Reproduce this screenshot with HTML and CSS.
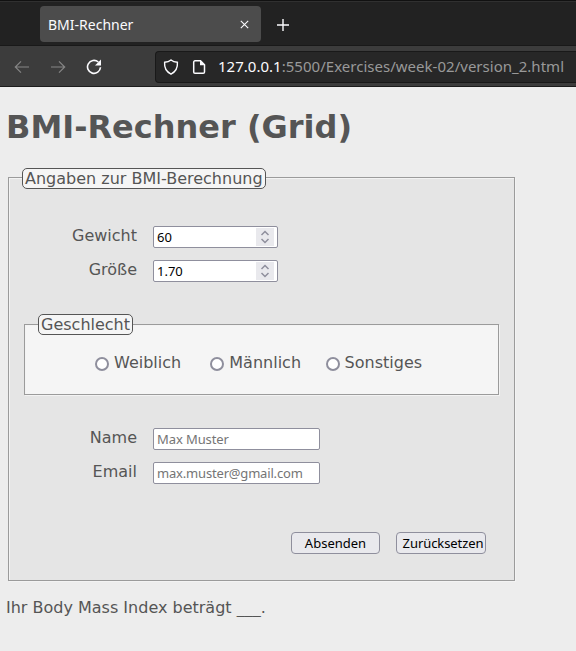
FILE: index.html
```html
<!DOCTYPE html>
<html lang="de">
<head>
<meta charset="utf-8">
<title>BMI-Rechner</title>
<link rel="stylesheet" href="styles.css">
</head>
<body>
<header class="browser">
  <div class="tabbar">
    <div class="tab">
      <span class="tab-title">BMI-Rechner</span>
      <svg class="close" width="9" height="9" viewBox="0 0 9 9"><path d="M.8.8l7.4 7.4M8.2.8L.8 8.2"/></svg>
    </div>
    <svg class="plus" width="12" height="12" viewBox="0 0 12 12"><path d="M6 0v12M0 6h12"/></svg>
  </div>
  <div class="toolbar">
    <svg class="nav" width="16" height="16" viewBox="0 0 16 16"><path d="M15 8H1.5M7 2.3L1.3 8 7 13.7"/></svg>
    <svg class="nav" width="16" height="16" viewBox="0 0 16 16"><path d="M1 8h13.500M9 2.300L14.700 8 9 13.700"/></svg>
    <svg class="nav reload" width="16" height="16" viewBox="0 0 16 16"><path d="M12.300 3A6.500 6.500 0 1 0 14.500 8.300"/><path class="solid" d="M15 .5v6H9z"/></svg>
    <div class="urlbar">
      <svg class="shield" width="16" height="16" viewBox="0 0 16 16"><path d="M8 1C6.300 2.400 4 3.100 1.600 3.300 1.200 8.500 3 12.700 8 15.100 13 12.700 14.800 8.500 14.400 3.300 12 3.100 9.700 2.400 8 1z"/></svg>
      <svg class="page-icon" width="14" height="16" viewBox="0 0 14 16"><path d="M3 1.800h5.500l4 4V13a1.300 1.300 0 0 1-1.300 1.300H3A1.300 1.300 0 0 1 1.700 13V3.100A1.300 1.300 0 0 1 3 1.800z"/><path class="solid" d="M8 1.300l5 5H8z"/></svg>
      <span class="url"><b>127.0.0.1</b>:5500/Exercises/week-02/version_2.html</span>
    </div>
  </div>
</header>
<main>
  <h1>BMI-Rechner (Grid)</h1>
  <form>
    <fieldset class="outer">
      <legend>Angaben zur BMI-Berechnung</legend>
      <div class="fields">
        <label for="gewicht">Gewicht</label>
        <div class="number">
          <input id="gewicht" type="text" value="60">
          <svg class="spin" width="18" height="18" viewBox="0 0 18 18"><path d="M5.500 7L9 3.500 12.500 7M5.500 11L9 14.500 12.500 11"/></svg>
        </div>
        <label for="groesse">Größe</label>
        <div class="number">
          <input id="groesse" type="text" value="1.70">
          <svg class="spin" width="18" height="18" viewBox="0 0 18 18"><path d="M5.500 7L9 3.500 12.500 7M5.500 11L9 14.500 12.500 11"/></svg>
        </div>
      </div>
      <fieldset class="gender">
        <legend>Geschlecht</legend>
        <div class="options">
          <label><input type="radio" name="g">Weiblich</label>
          <label><input type="radio" name="g">Männlich</label>
          <label><input type="radio" name="g">Sonstiges</label>
        </div>
      </fieldset>
      <div class="fields">
        <label for="name">Name</label>
        <input id="name" class="text" type="text" placeholder="Max Muster">
        <label for="email">Email</label>
        <input id="email" class="text email" type="text" placeholder="max.muster@gmail.com">
      </div>
      <div class="buttons">
        <button type="button" class="send">Absenden</button>
        <button type="reset" class="reset">Zurücksetzen</button>
      </div>
    </fieldset>
  </form>
  <p>Ihr Body Mass Index beträgt ___.</p>
</main>
</body>
</html>
```
FILE: styles.css
```css
* { box-sizing: border-box; }
body {
  margin: 0;
  background: #ededed;
  color: #555;
  font: 16px/19px "DejaVu Sans", sans-serif;
}
svg { display: block; flex: none; fill: none; stroke: #fbfbfe; }
.solid { fill: #fbfbfe; stroke: none; }

.browser {
  height: 87px;
  background: #3c3c3c;
  border-bottom: 1px solid #1c1c1c;
  font-family: "Noto Sans", "Open Sans", sans-serif;
}
.tabbar {
  display: flex;
  align-items: center;
  height: 46px;
  padding: 2px 0 0 40px;
  background: #222;
  border-top: 1px solid #111;
  border-bottom: 1px solid #191919;
  box-shadow: inset 0 1px #303030;
}
.tab {
  display: flex;
  align-items: center;
  justify-content: space-between;
  width: 221px;
  height: 36px;
  padding: 0 12px 0 8px;
  border-radius: 4px;
  background: #4c4c4c;
}
.tab-title { color: #fbfbfe; font-size: 14px; }
.close { stroke-width: 1.1; }
.plus { margin: 1px 0 0 16px; stroke-width: 1.4; }
.toolbar {
  display: flex;
  align-items: center;
  height: 40px;
  padding: 1px 0 0 14px;
}
.nav { margin-right: 20px; stroke: #858585; stroke-width: 1.2; }
.reload { margin-right: 53px; stroke: #fbfbfe; stroke-width: 1.6; }
.urlbar {
  display: flex;
  align-items: center;
  flex: 1;
  height: 32px;
  padding-left: 7px;
  border: 1px solid #191919;
  border-right: 0;
  border-radius: 4px 0 0 4px;
  background: #272727;
}
.shield { stroke-width: 1.4; }
.page-icon { margin-left: 13px; stroke-width: 1.5; }
.url { margin-left: 12px; color: #999; font-size: 15px; letter-spacing: .02px; white-space: nowrap; }
.url b { color: #fbfbfe; font-weight: 400; }

main { padding: 22px 0 0 6px; }
h1 { margin: 0; font-size: 32px; line-height: 37px; }
fieldset {
  min-width: 0;
  margin: 0;
  border: 1px solid #9b9b9b;
  box-shadow: 1px 1px #f3f3f3, inset 1px 1px #f3f3f3;
}
legend {
  height: 21px;
  padding: 0 2px;
  border: 1px solid #555;
  border-radius: 5px;
  background: #f5f5f5;
}
.outer {
  width: 507px;
  margin: 21px 0 0 2px;
  padding: 38px 15px 26px;
  background: #e5e5e5;
}
.outer > legend { position: relative; top: 1px; margin-left: -2px; }
.fields {
  display: grid;
  grid-template-columns: 113px auto;
  grid-auto-rows: 22px;
  gap: 12px 16px;
  justify-content: start;
}
.fields label { text-align: right; }
.fields input {
  width: 167px;
  height: 22px;
  padding: 1px 3px;
  border: 1px solid #8f8f9d;
  border-radius: 2px;
  background: #fff;
  color: #000;
  font: 13px "Noto Sans", "Open Sans", sans-serif;
}
.fields input::placeholder { color: #757575; }
.fields .text { letter-spacing: -.1px; }
.fields .email { letter-spacing: -.18px; }
.number { position: relative; width: 125px; }
.fields .number input { display: block; width: 125px; }
.spin {
  position: absolute;
  top: 2px;
  right: 4px;
  background: #e9e9ed;
  stroke: #8f8f9d;
  stroke-width: 1.5;
}
.gender {
  margin: 32px 0 33px;
  padding: 18px 0 22px 13px;
  background: #f5f5f5;
}
.options {
  display: grid;
  grid-template-columns: repeat(3, 115.3px);
  padding-left: 57px;
}
.options label { display: flex; height: 19px; }
.options input {
  appearance: none;
  width: 14px;
  height: 14px;
  margin: 4px 5px 0 0;
  border: 2px solid #8f8f9d;
  border-radius: 50%;
  background: #fff;
}
.buttons {
  display: flex;
  justify-content: flex-end;
  gap: 16px;
  margin-top: 48px;
  padding-right: 13px;
}
button {
  height: 22px;
  padding: 0;
  border: 1px solid #8f8f9d;
  border-radius: 4px;
  background: #e9e9ed;
  color: #000;
  font: 13px "Noto Sans", "Open Sans", sans-serif;
  white-space: nowrap;
}
.send { width: 89px; }
.reset { width: 90px; padding-left: 4px; letter-spacing: -.08px; }
p { margin: 17px 0 0; }
```
